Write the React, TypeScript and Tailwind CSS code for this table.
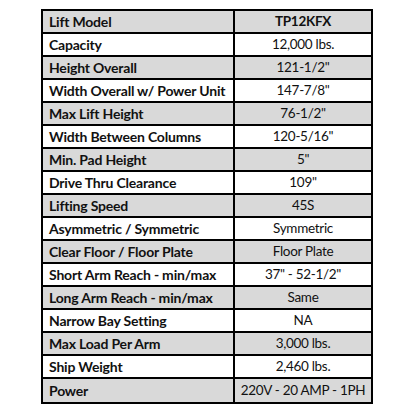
import React from "react";

const rows: [string, string][] = [
  ["Lift Model", "TP12KFX"],
  ["Capacity", "12,000 lbs."],
  ["Height Overall", "121-1/2\""],
  ["Width Overall w/ Power Unit", "147-7/8\""],
  ["Max Lift Height", "76-1/2\""],
  ["Width Between Columns", "120-5/16\""],
  ["Min. Pad Height", "5\""],
  ["Drive Thru Clearance", "109\""],
  ["Lifting Speed", "45S"],
  ["Asymmetric / Symmetric", "Symmetric"],
  ["Clear Floor / Floor Plate", "Floor Plate"],
  ["Short Arm Reach - min/max", "37\" - 52-1/2\""],
  ["Long Arm Reach - min/max", "Same"],
  ["Narrow Bay Setting", "NA"],
  ["Max Load Per Arm", "3,000 lbs."],
  ["Ship Weight", "2,460 lbs."],
  ["Power", "220V - 20 AMP - 1PH"],
];

export default function App() {
  return (
    <div
      className="w-[414px] h-[414px] bg-white pt-[9px] pl-[41px] text-[#111] text-[14px]"
      style={{ fontFamily: "Lato, 'Open Sans', sans-serif" }}
    >
      <div className="w-[332px] border-2 border-black flex flex-col">
        {rows.map(([k, v], i) => (
          <div
            key={k}
            className={
              "flex h-[23px] " +
              (i < rows.length - 1 ? "border-b-2 border-black " : "") +
              (i % 2 === 0 ? "bg-[#d9d9d9]" : "bg-white")
            }
          >
            <div className="w-[192px] border-r-2 border-black pl-[6px] flex items-center font-bold whitespace-nowrap overflow-hidden tracking-[-0.2px]">
              {k}
            </div>
            <div
              className={
                "flex-1 flex items-center justify-center whitespace-nowrap text-[13.5px] tracking-[-0.3px] " +
                (i === 0 ? "font-bold" : "")
              }
            >
              {v}
            </div>
          </div>
        ))}
      </div>
    </div>
  );
}
